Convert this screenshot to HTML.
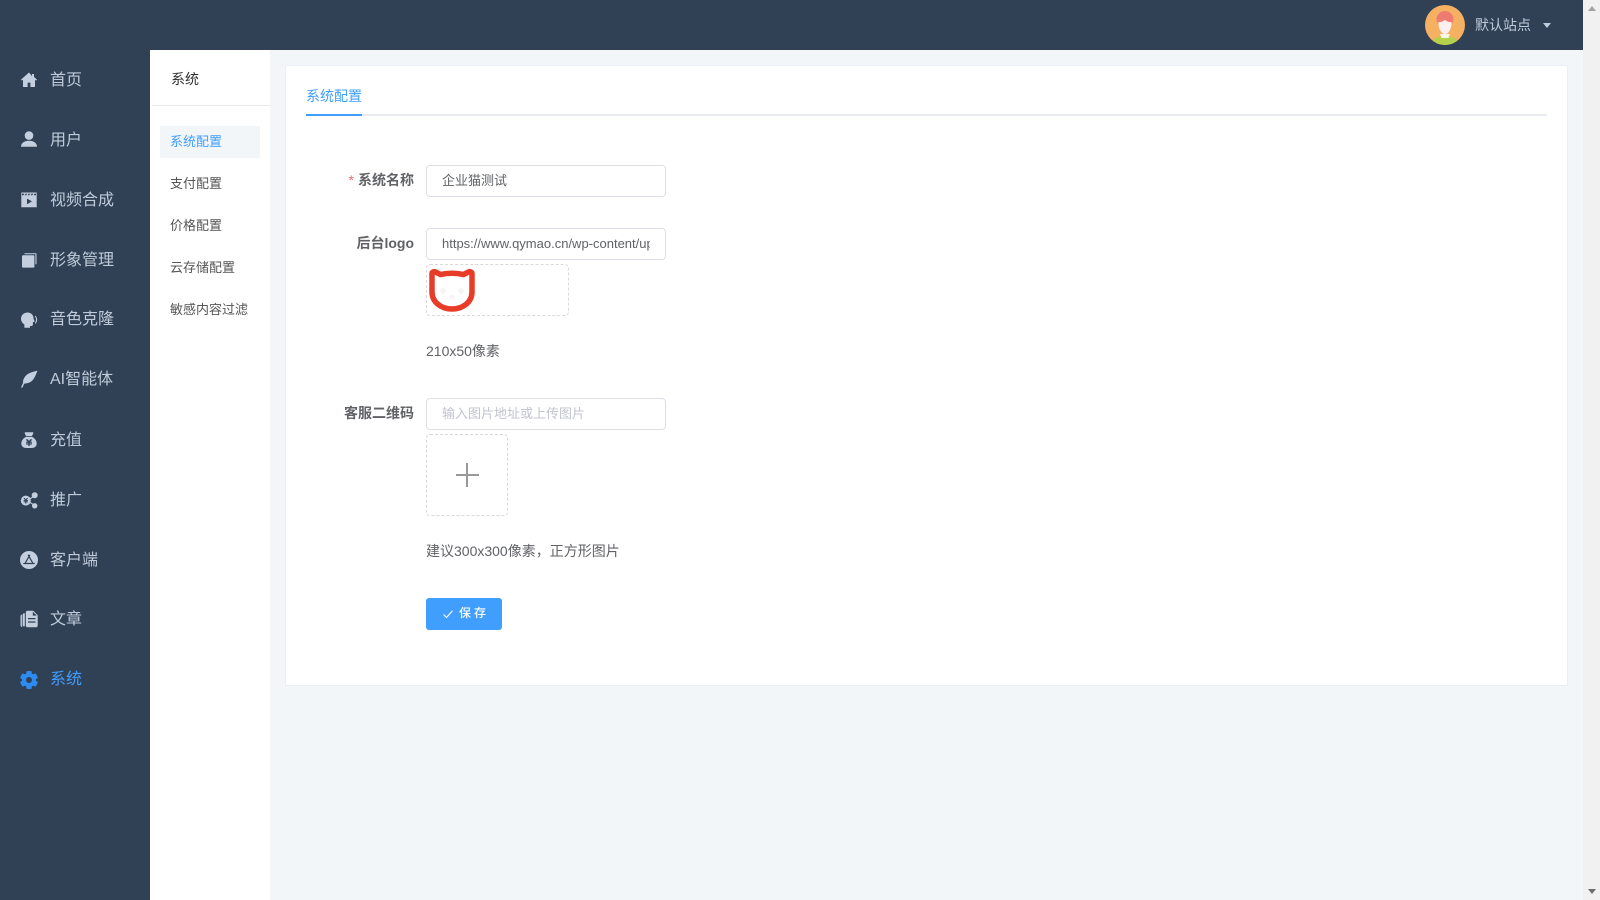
<!DOCTYPE html>
<html lang="zh-CN">
<head>
<meta charset="utf-8">
<title>系统配置</title>
<style>
html,body{margin:0;padding:0;width:1600px;height:900px;overflow:hidden;background:#f3f6f9;font-family:"Liberation Sans","Noto Sans CJK SC",sans-serif;color:#606266}
div,span{box-sizing:border-box}
.a{position:absolute;white-space:nowrap}
#top{left:0;top:0;width:1583px;height:50px;background:#304156}
#side{left:0;top:50px;width:150px;height:850px;background:#304156}
#sub{left:150px;top:50px;width:120px;height:850px;background:#fff}
.m{left:50px;font-size:16px;line-height:24px;color:#bfcbd9}
.i{left:20px;width:18px;height:18px;fill:#c3cfdf}
.s{left:170px;font-size:13px;line-height:20px;color:#555}
#card{left:285px;top:65px;width:1283px;height:621px;background:#fff;border:1px solid #ebeef5;border-radius:2px}
.l{font-size:14px;font-weight:bold;line-height:20px;color:#606266;text-align:right;right:1186px}
.in{left:426px;width:240px;height:32px;background:#fff;border:1px solid #dcdfe6;border-radius:4px;font-size:13px;line-height:30px;padding:0 15px;color:#606266;overflow:hidden}
.up{border:1px dashed #d9d9d9;border-radius:4px;left:426px;background:#fff}
.t{left:426px;font-size:14px;line-height:20px;color:#606266}
</style>
</head>
<body>
<div class="a" id="top"></div>
<div class="a" id="side"></div>
<div class="a" id="sub"></div>

<!-- sidebar icons -->
<svg class="a i" style="top:71px" viewBox="0 0 18 18"><path d="M9 1.500 1 8.600l.9 1 1.100-.9v7.300h4.600v-4.400h2.800V16H15V8.700l1.100.9.9-1-3-2.700V3h-2v2.100z"/></svg>
<svg class="a i" style="top:130px" viewBox="0 0 18 18"><circle cx="9" cy="5.600" r="4.300"/><path d="M1 16.800c0-3.600 3.200-6 8-6s8 2.400 8 6z"/></svg>
<svg class="a i" style="top:191px" viewBox="0 0 18 18"><path d="M1.300 1.500h15.400v14.800H1.300zM2 2.600v1.700h1.400l.9-1.700zm3.600 0-.9 1.700h1.600l.9-1.700zm3 0-.9 1.700h1.600l.9-1.700zm3 0-.9 1.700h1.600l.9-1.700zm3 0-.9 1.700H16V2.600z" fill-rule="evenodd"/><path d="M7 7.600v5.600l5-2.800z" fill="#304156"/></svg>
<svg class="a i" style="top:251px" viewBox="0 0 18 18"><path d="M4.500 2.200h11.200a.8.800 0 0 1 .8.800v10.300h-1.100V3.300H4.500z"/><rect x="2" y="4.200" width="12.400" height="12.400" rx="1"/></svg>
<svg class="a i" style="top:311px" viewBox="0 0 18 18"><path d="M7.500 1.500c3.600 0 6 2.600 6 5.700 0 1.100.9 2 1 2.900.1.600-.5.800-1.100 1l-.5.200v2.200c0 1-.7 1.500-1.600 1.500H10v1.800H4.400v-3.200C2.400 12.200 1 10.200 1 7.800c0-3.600 3-6.300 6.500-6.300z"/><path d="M15.600 4.700c1 1.300 1.500 2.600 1.500 4s-.5 2.700-1.500 4l-.8-.6c.8-1.100 1.200-2.200 1.200-3.400s-.4-2.300-1.200-3.400z"/></svg>
<svg class="a i" style="top:370px" viewBox="0 0 18 18"><path d="M17.400.6C14 1.800 9.500 2.200 6.500 5 3.700 7.600 2.900 10.500 3 13L1 17.200l1.300.6L4.300 13.600c3.800 0 6.800-1.400 8.800-4 1.900-2.500 3.200-5.700 4.300-9z"/></svg>
<svg class="a i" style="top:431px" viewBox="0 0 18 18"><path d="M5.200 1.300h7.600c.5 0 .7.500.5 1L12 5H6L4.700 2.300c-.2-.5 0-1 .5-1z"/><path d="M6.300 5.800h5.400c2.800 1.200 5 3.800 5 6.700 0 3-2.200 4.500-5.200 4.500H6.500c-3 0-5.200-1.500-5.200-4.500 0-2.900 2.200-5.500 5-6.700z"/><path d="M5.800 8.400h2.100L9 10l1.100-1.600h2.100l-1.600 2.300H12v1.100H9.700v.6H12v1.100H9.700V15H8.300v-1.500H6v-1.100h2.300v-.6H6v-1.100h1.400z" fill="#304156"/></svg>
<svg class="a i" style="top:491px" viewBox="0 0 18 18"><path d="M13.500 5 8 8.300l.5.900L14 6zM8.500 10l-.5.900 5.500 3.300.5-.9z"/><circle cx="5.800" cy="9.600" r="5"/><circle cx="14.700" cy="4.300" r="3"/><circle cx="14.700" cy="14.800" r="2.700"/><path d="M3.500 7h1.300l1 1.500 1-1.500h1.300L6.800 9H8v.9H6.400v.5H8v.9H6.400v1.200H5.200v-1.200H3.600v-.9h1.600v-.5H3.600V9h1.200z" fill="#304156"/></svg>
<svg class="a i" style="top:551px" viewBox="0 0 18 18"><circle cx="9" cy="9" r="9"/><path d="M9.900 3.800 5 12.500M8.100 3.800 13 12.500M3.300 12.500h11.400" fill="none" stroke="#304156" stroke-width="1.200"/></svg>
<svg class="a i" style="top:610px" viewBox="0 0 18 18"><path fill-rule="evenodd" d="M7.500.8h5.800l4.400 4.400v10.300c0 1-.7 1.700-1.700 1.700H7.500c-1 0-1.700-.7-1.700-1.700V2.500c0-1 .7-1.700 1.700-1.700zM8 8v1.200h7.500V8zm0 3.400v1.200h7.500v-1.200zM12.800 1.700v3.900h3.900z"/><path d="M4.800 3.200v13.200h-.5c-1 0-1.700-.7-1.700-1.700V4.900c0-1 .7-1.700 1.700-1.700zM1.900 4.500v11c0 .7.300 1.300.9 1.600-1.300 0-2.300-.7-2.300-1.900V6.400c0-.9.600-1.600 1.400-1.900z"/></svg>
<svg class="a" style="left:20px;top:671px;width:18px;height:18px" viewBox="0 0 18 18"><g fill="#2d8cf0"><circle cx="9" cy="9" r="7"/><rect x="6.300" y="0" width="5.400" height="4" rx="1"/><rect x="6.300" y="14" width="5.400" height="4" rx="1"/><rect x="6.300" y="0" width="5.400" height="4" rx="1" transform="rotate(60 9 9)"/><rect x="6.300" y="14" width="5.400" height="4" rx="1" transform="rotate(60 9 9)"/><rect x="6.300" y="0" width="5.400" height="4" rx="1" transform="rotate(120 9 9)"/><rect x="6.300" y="14" width="5.400" height="4" rx="1" transform="rotate(120 9 9)"/></g><circle cx="9" cy="9" r="3" fill="#304156"/></svg>

<!-- sidebar text -->
<div class="a m" style="top:69px">首页</div>
<div class="a m" style="top:129px">用户</div>
<div class="a m" style="top:189px">视频合成</div>
<div class="a m" style="top:249px">形象管理</div>
<div class="a m" style="top:308px">音色克隆</div>
<div class="a m" style="top:368px">AI智能体</div>
<div class="a m" style="top:429px">充值</div>
<div class="a m" style="top:489px">推广</div>
<div class="a m" style="top:549px">客户端</div>
<div class="a m" style="top:608px">文章</div>
<div class="a m" style="top:668px;color:#409eff">系统</div>

<!-- submenu -->
<div class="a" style="left:171px;top:69px;font-size:14px;line-height:20px;color:#303133">系统</div>
<div class="a" style="left:152px;top:105px;width:118px;height:1px;background:#e8eaee"></div>
<div class="a" style="left:160px;top:126px;width:100px;height:32px;background:#f3f6f9;border-radius:2px"></div>
<div class="a s" style="top:132px;color:#409eff">系统配置</div>
<div class="a s" style="top:174px">支付配置</div>
<div class="a s" style="top:216px">价格配置</div>
<div class="a s" style="top:258px">云存储配置</div>
<div class="a s" style="top:300px">敏感内容过滤</div>

<!-- header right -->
<svg class="a" style="left:1425px;top:5px;width:40px;height:40px" viewBox="0 0 40 40">
<defs><clipPath id="c"><circle cx="20" cy="20" r="20"/></clipPath></defs>
<g clip-path="url(#c)">
<rect width="40" height="40" fill="#f6b062"/>
<path d="M7 40c0-6 5-9 13-9s13 3 13 9z" fill="#b5d04a"/>
<ellipse cx="20" cy="14" rx="8.500" ry="8" fill="#ee7b70"/>
<path d="M13.500 17c2 .5 4-.5 6.500-2 2 1.500 4.500 2.500 6.500 2 .3 6-2.500 12-6.500 12s-6.800-6-6.500-12z" fill="#fdeef0"/>
<path d="M15 29h10l-1.500 4h-7z" fill="#fbf6e6"/>
</g></svg>
<div class="a" style="left:1475px;top:15px;font-size:14px;line-height:20px;color:#bfcbd9">默认站点</div>
<div class="a" style="left:1543px;top:23px;width:0;height:0;border-left:4px solid transparent;border-right:4px solid transparent;border-top:5px solid #bfcbd9"></div>

<!-- card -->
<div class="a" id="card"></div>
<div class="a" style="left:306px;top:86px;font-size:14px;line-height:20px;color:#409eff">系统配置</div>
<div class="a" style="left:306px;top:114px;width:1241px;height:2px;background:#e8ebf0"></div>
<div class="a" style="left:306px;top:114px;width:56px;height:2px;background:#409eff"></div>

<!-- row 1 -->
<div class="a l" style="top:170px"><span style="color:#f56c6c;font-weight:normal;margin-right:4px">*</span>系统名称</div>
<div class="a in" style="top:165px">企业猫测试</div>

<!-- row 2 -->
<div class="a l" style="top:233px">后台logo</div>
<div class="a in" style="top:228px"><div style="width:208px;overflow:hidden;white-space:nowrap;font-size:13px">https://www.qymao.cn/wp-content/uploads/logo.png</div></div>
<div class="a up" style="top:264px;width:143px;height:52px"></div>
<svg class="a" style="left:428px;top:268px;width:50px;height:44px" viewBox="0 0 50 44">
<path d="M4 5.500c0-1.500 2-2.300 3.500-1.500l5 2.500c7-1.500 16-1.500 23 0l5-2.500c1.500-.8 3.500 0 3.500 1.500V24c0 10-9 17-20 17S4 34 4 24z" fill="#fff" stroke="#e63c28" stroke-width="5.500" stroke-linejoin="round"/>
<circle cx="15" cy="23" r="3" fill="#f6f4f4"/><circle cx="33" cy="23" r="3" fill="#f6f4f4"/><ellipse cx="24" cy="29" rx="3" ry="2" fill="#f6f4f4"/>
</svg>
<div class="a t" style="top:341px">210x50像素</div>

<!-- row 3 -->
<div class="a l" style="top:403px">客服二维码</div>
<div class="a in" style="top:398px;color:#c0c4cc">输入图片地址或上传图片</div>
<div class="a up" style="top:434px;width:82px;height:82px"></div>
<div class="a" style="left:456px;top:474px;width:23px;height:2px;background:#999"></div>
<div class="a" style="left:466px;top:463px;width:2px;height:24px;background:#999"></div>
<div class="a t" style="top:541px">建议300x300像素，正方形图片</div>

<!-- save -->
<div class="a" style="left:426px;top:598px;width:76px;height:32px;background:#409eff;border-radius:3px"></div>
<svg class="a" style="left:442px;top:608px;width:12px;height:12px" viewBox="0 0 12 12"><path d="M1.500 6.500 4.500 9.500 10.500 2.800" fill="none" stroke="#fff" stroke-width="1.100"/></svg>
<div class="a" style="left:459px;top:603px;font-size:12px;line-height:21px;color:#fff;letter-spacing:3px;font-weight:500">保存</div>

<!-- scrollbar -->
<div class="a" style="left:1583px;top:0;width:17px;height:900px;background:#f1f1f1"></div>
<div class="a" style="left:1588px;top:6px;width:0;height:0;border-left:4px solid transparent;border-right:4px solid transparent;border-bottom:5px solid #a3a3a3"></div>
<div class="a" style="left:1588px;top:889px;width:0;height:0;border-left:4px solid transparent;border-right:4px solid transparent;border-top:5px solid #6e6e6e"></div>
</body>
</html>
